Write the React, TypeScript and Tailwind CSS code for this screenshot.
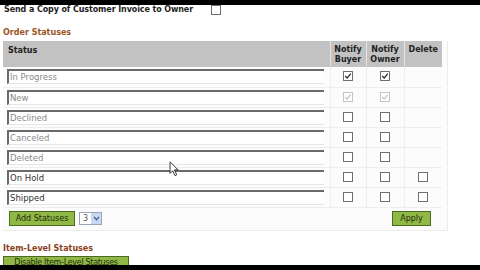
import React from "react";

const statuses = [
  { name: "In Progress", buyer: true, owner: true, disabled: false, del: false, custom: false },
  { name: "New", buyer: true, owner: true, disabled: true, del: false, custom: false },
  { name: "Declined", buyer: false, owner: false, disabled: false, del: false, custom: false },
  { name: "Canceled", buyer: false, owner: false, disabled: false, del: false, custom: false },
  { name: "Deleted", buyer: false, owner: false, disabled: false, del: false, custom: false },
  { name: "On Hold", buyer: false, owner: false, disabled: false, del: true, custom: true },
  { name: "Shipped", buyer: false, owner: false, disabled: false, del: true, custom: true },
];

function Box({ checked, disabled }: { checked?: boolean; disabled?: boolean }) {
  return (
    <span
      className={`inline-flex h-[10px] w-[10px] items-center justify-center border align-middle bg-white ${
        disabled ? "border-[#c4c4c4]" : "border-[#6f6f6f]"
      }`}
    >
      {checked && (
        <svg viewBox="0 0 10 10" className="h-[8px] w-[8px]">
          <path
            d="M1.5 5 L4 7.5 L8.5 2"
            fill="none"
            stroke={disabled ? "#c8c8c8" : "#2a3a2a"}
            strokeWidth="1.6"
          />
        </svg>
      )}
    </span>
  );
}

function GreenButton({ children, className = "" }: { children: React.ReactNode; className?: string }) {
  return (
    <button
      className={`block whitespace-nowrap border border-[#4d6b1f] bg-[#8fb845] text-[8px] leading-[11px] text-[#1f2a10] ${className}`}
    >
      {children}
    </button>
  );
}

export default function App() {
  return (
    <div
      className="relative h-[270px] w-[480px] overflow-hidden whitespace-nowrap bg-white text-[#222]"
      style={{ fontFamily: '"DejaVu Sans", Verdana, sans-serif' }}
    >
      <div className="h-[5px] bg-black" />

      {/* invoice copy */}
      <div className="flex h-[9px] items-center px-[4px]">
        <span className="w-[207px] text-[8px] font-bold leading-[9px] tracking-[-0.1px]">
          Send a Copy of Customer Invoice to Owner
        </span>
        <Box />
      </div>

      <h3 className="mt-[14px] px-[3px] text-[8px] font-bold leading-[9px] text-[#9b5424]">
        Order Statuses
      </h3>

      <div className="ml-[3px] mt-[4px] w-[445px] border-b border-r border-[#ececec] bg-[#fcfcfc]">
        <table className="w-[439px] border-collapse text-[8px]">
          <thead>
            <tr className="h-[26px] bg-[#c2c2c2] align-top">
              <th className="px-[5px] pt-[5px] text-left font-bold leading-[10px]">Status</th>
              <th className="w-[36px] border-l border-[#e4e4e4] pt-[4px] text-center font-bold leading-[10px]">
                Notify
                <br />
                Buyer
              </th>
              <th className="w-[38px] border-l border-[#e4e4e4] pt-[4px] text-center font-bold leading-[10px]">
                Notify
                <br />
                Owner
              </th>
              <th className="w-[38px] border-l border-[#e4e4e4] pt-[4px] text-center font-bold leading-[10px]">
                Delete
              </th>
            </tr>
          </thead>
          <tbody>
            {statuses.map((s) => (
              <tr key={s.name} className="h-[20px] border-b border-[#eeeeee]">
                <td className="py-0 pl-[4px] pr-[6px]">
                  <div
                    className={`h-[15px] border-l-2 border-t-2 border-b border-l-[#6a6a6a] border-t-[#6a6a6a] border-b-[#e6e6e6] bg-white pl-[1px] text-[8.5px] leading-[12px] ${
                      s.custom ? "text-[#333]" : "text-[#8a8a8a]"
                    }`}
                  >
                    {s.name}
                  </div>
                </td>
                <td className="border-l border-dotted border-[#e2e2e2] text-center">
                  <Box checked={s.buyer} disabled={s.disabled} />
                </td>
                <td className="border-l border-dotted border-[#e2e2e2] text-center">
                  <Box checked={s.owner} disabled={s.disabled} />
                </td>
                <td className="border-l border-dotted border-[#e2e2e2] text-center">
                  {s.del && <Box />}
                </td>
              </tr>
            ))}
          </tbody>
        </table>
        <div className="flex h-[22px] items-center justify-between pl-[6px] pr-[16px]">
          <div className="flex items-center gap-[4px]">
            <GreenButton className="h-[15px] w-[66px]">Add Statuses</GreenButton>
            <span className="flex h-[13px] w-[23px] items-center justify-between border border-[#9aa6b8] bg-white pl-[3px] text-[8px] leading-[10px] text-[#555]">
              3
              <span className="flex h-[11px] w-[10px] items-center justify-center bg-[#c9d7f2]">
                <svg viewBox="0 0 8 6" className="h-[5px] w-[7px]">
                  <path d="M1 1 L4 4.5 L7 1" fill="none" stroke="#3a5a9a" strokeWidth="1.5" />
                </svg>
              </span>
            </span>
          </div>
          <GreenButton className="h-[15px] w-[39px]">Apply</GreenButton>
        </div>
      </div>

      <h3 className="mt-[13px] px-[3px] text-[8px] font-bold leading-[9px] text-[#8a3f1c]">
        Item-Level Statuses
      </h3>
      <div className="mt-[3px] flex px-[3px]">
        <GreenButton className="h-[14px] w-[126px] tracking-[-0.3px]">Disable Item-Level Statuses</GreenButton>
      </div>

      {/* mouse pointer */}
      <svg viewBox="0 0 12 18" className="absolute left-[169px] top-[161px] h-[16px] w-[11px]">
        <path d="M1 1 L1 14 L4 11 L6.5 16.5 L8.5 15.5 L6 10 L10 10 Z" fill="white" stroke="#222" strokeWidth="1" />
      </svg>

      <div className="absolute bottom-0 left-0 h-[5px] w-full bg-black" />
    </div>
  );
}
